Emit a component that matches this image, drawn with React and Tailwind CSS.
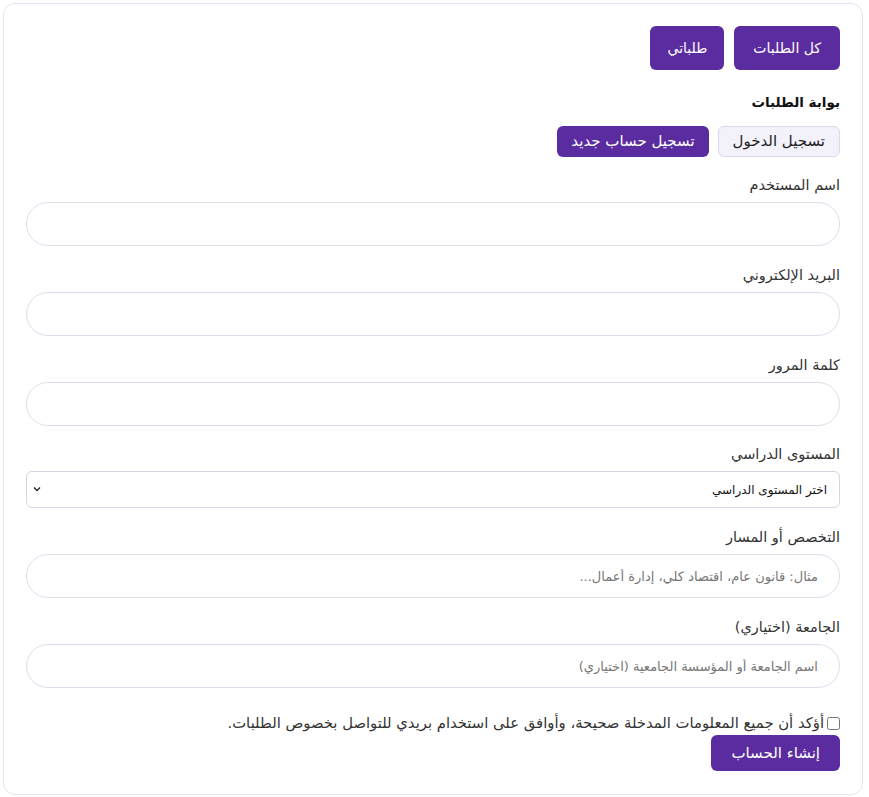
import React from "react";

const fields = [
  { label: "اسم المستخدم", placeholder: "" },
  { label: "البريد الإلكتروني", placeholder: "" },
  { label: "كلمة المرور", placeholder: "" },
];

function Field({ label, placeholder }) {
  return (
    <div className="flex flex-col">
      <label className="text-[14.5px] leading-[20px] text-[#333] mb-[7px]">{label}</label>
      <input
        placeholder={placeholder}
        className="h-[44px] w-full rounded-full border border-[#e0deee] bg-white px-[21px] text-[13px] text-[#333] placeholder:text-[#777] outline-none"
      />
    </div>
  );
}

export default function App() {
  return (
    <div dir="rtl" className="pt-[3px] pb-[2px] ml-[3px] mr-[6px] bg-white" style={{ fontFamily: '"DejaVu Sans", sans-serif' }}>
      <div className="rounded-[12px] border border-[#e3e1f2] px-[22px] pt-[22px] pb-[23px] bg-white">
        <div className="flex gap-[10px]">
          <button className="h-[44px] px-[19px] rounded-[6px] bg-[#5b2c9f] text-white text-[14px]">كل الطلبات</button>
          <button className="h-[44px] px-[17px] rounded-[6px] bg-[#5b2c9f] text-white text-[14px]">طلباتي</button>
        </div>

        <h2 className="mt-[22px] text-[13.5px] leading-[20px] font-bold text-[#111]">بوابة الطلبات</h2>

        <div className="mt-[14px] flex gap-[9px]">
          <button className="h-[31px] px-[14px] rounded-[6px] bg-[#f3f1fa] border border-[#dcd9ec] text-[#222] text-[15px]">تسجيل الدخول</button>
          <button className="h-[31px] px-[14px] rounded-[6px] bg-[#5b2c9f] text-white text-[15px]">تسجيل حساب جديد</button>
        </div>

        <div className="mt-[18px] flex flex-col gap-[19px]">
          {fields.map((f) => (
            <Field key={f.label} {...f} />
          ))}

          <div className="flex flex-col -mt-[1px]">
            <label className="text-[14.5px] leading-[20px] text-[#333] mb-[7px]">المستوى الدراسي</label>
            <div className="relative">
              <select className="appearance-none h-[37px] w-full rounded-[6px] border border-[#d6d4e2] bg-white px-[12px] text-[12px] text-[#111]">
                <option>اختر المستوى الدراسي</option>
              </select>
              <svg className="absolute left-[7px] top-[15px] pointer-events-none" width="8" height="6" viewBox="0 0 8 6" fill="none">
                <path d="M1 1.5L4 4.5L7 1.5" stroke="#222" strokeWidth="1.3" />
              </svg>
            </div>
          </div>

          <Field label="التخصص أو المسار" placeholder="مثال: قانون عام، اقتصاد كلي، إدارة أعمال..." />
          <Field label="الجامعة (اختياري)" placeholder="اسم الجامعة أو المؤسسة الجامعية (اختياري)" />
        </div>

        <div className="mt-[25px] flex items-center gap-[3px] text-[14.8px] leading-[20px] text-[#333]">
          <input type="checkbox" className="w-[13px] h-[13px]" />
          <span>أؤكد أن جميع المعلومات المدخلة صحيحة، وأوافق على استخدام بريدي للتواصل بخصوص الطلبات.</span>
        </div>

        <button className="mt-[2px] h-[36px] px-[20px] rounded-[6px] bg-[#5b2c9f] text-white text-[15px]">إنشاء الحساب</button>
      </div>
    </div>
  );
}
